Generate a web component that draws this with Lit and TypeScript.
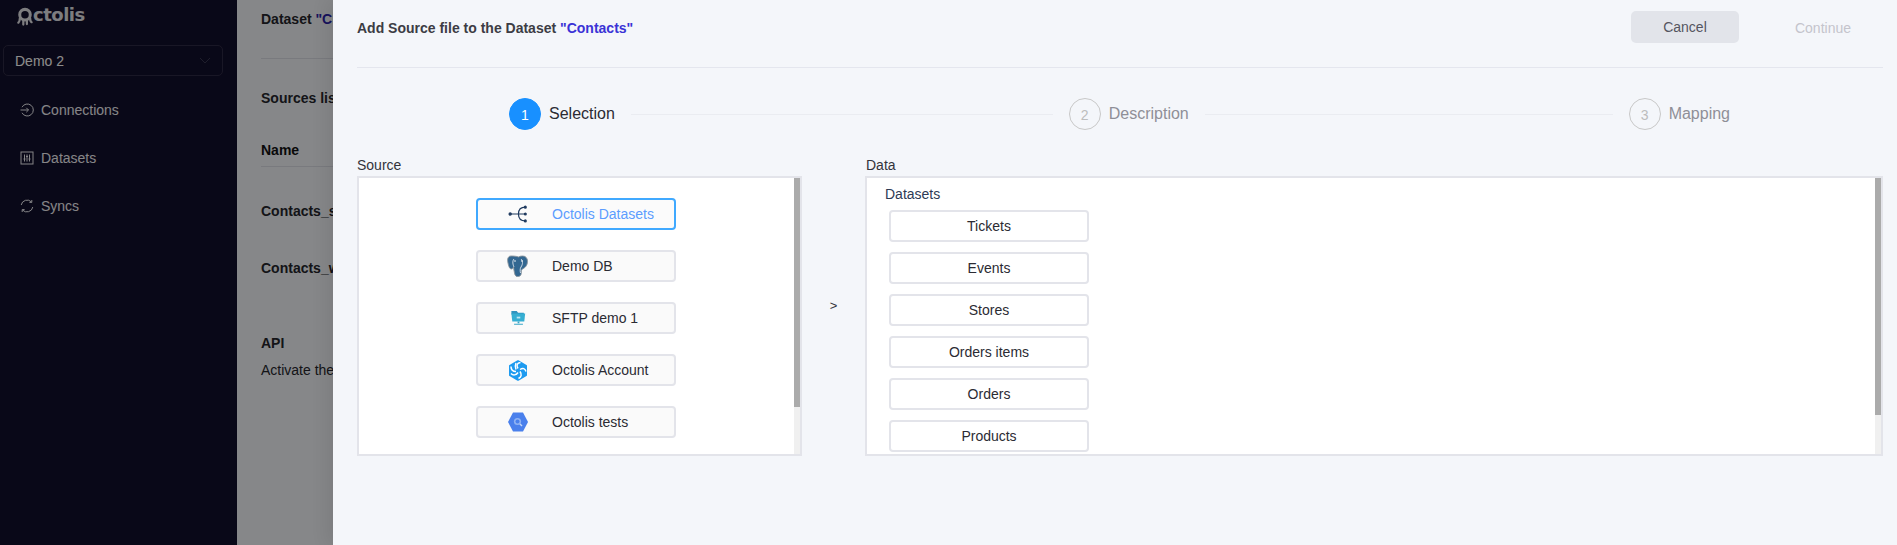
import { LitElement, html, css, svg } from "lit";
import { customElement } from "lit/decorators.js";

const arrowIcon = svg`<svg width="24" height="24" viewBox="0 0 24 24" fill="none" stroke="#1f3a5f" stroke-width="1.3" stroke-linecap="round"><path d="M3 12H20"/><circle cx="3.500" cy="12" r="1.200" fill="#1f3a5f"/><path d="M20 4.500C15 4.500 12.500 7 12.500 12s2.500 7.500 7.500 7.500"/><circle cx="20" cy="4.500" r="1" fill="#1f3a5f"/><circle cx="20" cy="19.500" r="1" fill="#1f3a5f"/><circle cx="20" cy="12" r="1" fill="#1f3a5f"/></svg>`;
const pgIcon = svg`<svg width="22" height="22" viewBox="0 0 22 22"><path d="M4 1C1 1 0 4 1 8c.6 3 1.500 6 3.500 6 1 0 1.500-1 2-2 .3 2 .5 4 1 6 .5 3 2 4 4 3.500 2.500-.5 2.800-2 2.800-4.500 0-1.500 0-2 1-2.800 2-1 5.200-3.200 5.200-8C20.500 3 18.500 1 15.500 1c-1.500 0-3 .3-4 1-1-.7-5-1-7.500-1z" fill="#336791" stroke="#8a949c" stroke-width=".9"/><path d="M7 4c-2 2-1 6 0 8M14 4c2 2 2 5 0 8-1 1.500-1 4-.5 6" fill="none" stroke="#dfe6ee" stroke-width=".9"/><circle cx="8" cy="6" r=".8" fill="#fff"/><circle cx="15" cy="6" r=".8" fill="#fff"/></svg>`;
const sftpIcon = svg`<svg width="15" height="16" viewBox="0 0 16 18"><path d="M0 1h6l1.500 2H14v2H0z" fill="#2f93bf"/><path d="M0 4h15.500l-1 9H1z" fill="#35aed2"/><rect x="6" y="7.500" width="4" height="2" fill="#bfe6f2"/><path d="M7 13h2v2H7zM3 15.500h10v1H3z" fill="#3aa6c8"/></svg>`;
const swirlIcon = svg`<svg width="20" height="21" viewBox="0 0 20 21"><path d="M10 1.200l8 4.600v9.400l-8 4.600-8-4.600V5.800z" fill="#1e9bf0" stroke="#1e9bf0" stroke-width="2" stroke-linejoin="round"/><g fill="none" stroke="#fff" stroke-width="1.500"><circle cx="10" cy="10.500" r="1.700" fill="#1e9bf0" stroke="none"/><path d="M10 8.500C8 5.500 9 3 12.500 2.500"/><path d="M12 9.500C15 7.500 17 8.500 18 11.500"/><path d="M12 11.500C14 14.500 13.500 17 10.500 18.500"/><path d="M10 12.500C8 15.500 5 15.500 3 13.500"/><path d="M8 11.500C5 11.500 3 9.500 3 6.500"/><path d="M8 9.500C7 6.500 7 5 8 3"/></g></svg>`;
const bqIcon = svg`<svg width="20" height="20" viewBox="0 0 20 20"><path d="M5 .5h10L20 10l-5 9.500H5L0 10z" fill="#4a80ec"/><circle cx="9.500" cy="9.500" r="3.600" fill="#8fb2f3"/><circle cx="9.500" cy="9.500" r="2" fill="#4a80ec"/><path d="M12 12l2 2" stroke="#c6d8f8" stroke-width="1.400"/></svg>`;

const connIcon = svg`<svg width="14" height="14" viewBox="0 0 14 14" fill="none" stroke="currentColor" stroke-width="1"><path d="M2 4.200A6 6 0 1 1 2 9.800"/><path d="M.5 7H8.500M6.300 4.800L8.500 7 6.300 9.200"/></svg>`;
const dataIcon = svg`<svg width="14" height="14" viewBox="0 0 14 14" fill="none" stroke="currentColor" stroke-width="1"><rect x="1" y="1" width="12" height="12"/><path d="M4.500 3.500v7M7 3.500v7M9.500 3.500v7"/><path d="M3.500 8h2M6 5.500h2M8.500 8h2"/></svg>`;
const syncIcon = svg`<svg width="14" height="14" viewBox="0 0 14 14" fill="none" stroke="currentColor" stroke-width="1"><path d="M1.200 6A6 6 0 0 1 11.500 3"/><path d="M12.800 8A6 6 0 0 1 2.500 11"/><path d="M11.800 1v2.400H9.400M2.200 13v-2.400h2.400"/></svg>`;

const octoLogo = svg`<svg class="octo" width="16" height="20" viewBox="0 0 17 20" fill="none"><circle cx="8.500" cy="7.500" r="5.600" stroke="currentColor" stroke-width="3.200"/><path d="M3 11.500c0 3-1 4-1.500 4.500M6.700 14v4M10.500 14v3.500M14 11.500c0 2.500.5 3.500 1.500 4" stroke="currentColor" stroke-width="2.400" stroke-linecap="round"/></svg>`;

const sources = [
  { name: "Octolis Datasets", icon: arrowIcon, active: true },
  { name: "Demo DB", icon: pgIcon },
  { name: "SFTP demo 1", icon: sftpIcon },
  { name: "Octolis Account", icon: swirlIcon },
  { name: "Octolis tests", icon: bqIcon },
];
const datasets = ["Tickets", "Events", "Stores", "Orders items", "Orders", "Products"];

@customElement("app-root")
export class AppRoot extends LitElement {
  static styles = css`
    :host { display: block; position: relative; width: 100%; height: 545px; overflow: hidden; background: #f4f6fa; font-family: "Liberation Sans", Arial, sans-serif; font-size: 14px; color: #2b2b33; }
    .page { display: flex; height: 545px; }
    .side { width: 237px; flex: none; background: #120f2c; color: #f0f0f5; box-sizing: border-box; }
    .logo { display: flex; align-items: flex-start; height: 32px; padding: 7px 0 0 17px; box-sizing: border-box; color: #e4e4e8; }
    .logo span { font: bold 18px/20px "DejaVu Sans", sans-serif; letter-spacing: -0.5px; position: relative; top: -2px; }
    .select { margin: 13px 0 0 3px; height: 31px; width: 220px; border: 1px solid #2e2b45; border-radius: 5px; display: flex; align-items: center; justify-content: space-between; padding: 0 11px; box-sizing: border-box; color: #fff; }
    .select svg { color: #3a3850; }
    .nav { display: flex; flex-direction: column; gap: 24px; padding: 22px 0 0 20px; }
    .nav div { display: flex; align-items: center; gap: 7px; height: 24px; color: #f2f2f6; }
    .main { width: 96px; flex: none; overflow: hidden; padding: 11px 0 0 24px; box-sizing: border-box; color: #26262c; }
    .main b { display: block; font-size: 14px; line-height: 16px; white-space: nowrap; }
    .main .q { color: #2b21a8; display: inline; }
    .main hr { border: 0; border-top: 1px solid #dcdfe6; margin: 0; }
    .main .gap-a { margin-top: 31px; }
    .main .gap-b { margin-top: 31px; }
    .main .gap-c { margin-top: 36px; }
    .main .gap-d { margin-top: 8px; }
    .main .gap-e { margin-top: 36px; }
    .main .gap-f { margin-top: 41px; }
    .main .gap-g { margin-top: 59px; }
    .main .gap-h { margin-top: 11px; line-height: 16px; white-space: nowrap; }
    .main .name { color: #111; }
    .mask { position: absolute; inset: 0; background: rgba(0, 0, 0, 0.45); }
    .drawer { position: absolute; top: 0; right: 0; bottom: 0; left: 333px; background: #f4f6fa; box-shadow: -6px 0 16px rgba(0, 0, 0, 0.08); padding: 0 14px 0 24px; box-sizing: border-box; display: flex; flex-direction: column; }
    .head { display: flex; align-items: center; justify-content: space-between; height: 68px; flex: none; border-bottom: 1px solid #e4e6ee; padding: 1px 0 12px; box-sizing: border-box; }
    .title { font-weight: bold; font-size: 14px; color: #3c3c44; }
    .title em { font-style: normal; color: #3a33d6; }
    .actions { display: flex; align-items: center; }
    .cancel { width: 108px; height: 32px; background: #e2e4ea; border-radius: 5px; display: flex; align-items: center; justify-content: center; color: #55555f; position: relative; top: -1px; }
    .continue { margin-left: 56px; margin-right: 32px; color: #c4c4cc; }
    .steps { display: flex; align-items: center; margin: 30px 153px 0 152px; height: 32px; }
    .circle { width: 32px; height: 32px; box-sizing: border-box; border-radius: 50%; border: 1px solid #c8c8c8; color: #bdbdbd; display: flex; align-items: center; justify-content: center; font-size: 14px; flex: none; padding-top: 2px; }
    .circle.on { background: #1890ff; border-color: #1890ff; color: #fff; }
    .lbl { font-size: 16px; margin-left: 8px; color: #8f8f97; flex: none; }
    .lbl.on { color: #2b2b33; }
    .line { height: 1px; background: #eaecf1; margin: 0 16px; flex: 1 1 0; }
    .line.a { flex-grow: 422; }
    .line.b { flex-grow: 408; }
    .cols { display: flex; margin-top: 27px; }
    .col { display: flex; flex-direction: column; }
    .col label { font-size: 14px; line-height: 16px; height: 19px; color: #33333b; }
    .box { height: 280px; box-sizing: border-box; border: 2px solid #e3e4ea; background: #fff; position: relative; overflow: hidden; }
    .bar { position: absolute; top: 0; right: 0; bottom: 0; width: 6px; background: #f0f0f0; }
    .bar i { display: block; width: 6px; background: #ababab; }
    .bar .s1 { height: 229px; }
    .bar .s2 { height: 237px; }
    .src { width: 445px; }
    .src .box { display: flex; flex-direction: column; align-items: center; gap: 20px; padding-top: 20px; padding-right: 7px; }
    .sbtn { width: 200px; height: 32px; flex: none; box-sizing: border-box; border: 2px solid #e3e4ea; border-radius: 4px; background: #fafafa; display: flex; align-items: center; color: #2b2b33; }
    .sbtn.on { border-color: #40a9ff; color: #5b9dff; background: #fbfbfb; }
    .ico { width: 22px; height: 22px; margin-left: 29px; margin-right: 23px; display: flex; align-items: center; justify-content: center; flex: none; }
    .sep { width: 63px; text-align: center; padding-top: 141px; font-size: 13px; color: #33333b; }
    .dst { flex: 1; }
    .dst label { padding-left: 1px; }
    .dst .box { padding: 7px 0 0 18px; }
    .dst h4 { margin: 0 0 6px; font-weight: normal; font-size: 14px; height: 19px; line-height: 19px; color: #2d3a55; }
    .list { display: flex; flex-direction: column; gap: 10px; padding-left: 4px; }
    .dbtn { width: 200px; height: 32px; box-sizing: border-box; border: 2px solid #e3e4ea; border-radius: 4px; display: flex; align-items: center; justify-content: center; color: #2b2b33; flex: none; }
  `;

  render() {
    return html`
      <div class="page">
        <aside class="side">
          <div class="logo">${octoLogo}<span>ctolis</span></div>
          <div class="select">Demo 2
            <svg width="12" height="8" viewBox="0 0 12 8" fill="none" stroke="currentColor"><path d="M1 1l5 5 5-5"/></svg>
          </div>
          <nav class="nav">
            <div>${connIcon}Connections</div>
            <div>${dataIcon}Datasets</div>
            <div>${syncIcon}Syncs</div>
          </nav>
        </aside>
        <main class="main">
          <b>Dataset <span class="q">"C</span></b>
          <hr class="gap-a" />
          <b class="gap-b">Sources lis</b>
          <b class="gap-c name">Name</b>
          <hr class="gap-d" />
          <b class="gap-e">Contacts_s</b>
          <b class="gap-f">Contacts_w</b>
          <b class="gap-g">API</b>
          <div class="gap-h">Activate the</div>
        </main>
      </div>
      <div class="mask"></div>
      <section class="drawer">
        <header class="head">
          <div class="title">Add Source file to the Dataset <em>"Contacts"</em></div>
          <div class="actions">
            <div class="cancel">Cancel</div>
            <div class="continue">Continue</div>
          </div>
        </header>
        <div class="steps">
          <div class="circle on">1</div><div class="lbl on">Selection</div><div class="line a"></div>
          <div class="circle">2</div><div class="lbl">Description</div><div class="line b"></div>
          <div class="circle">3</div><div class="lbl">Mapping</div>
        </div>
        <div class="cols">
          <div class="col src">
            <label>Source</label>
            <div class="box">
              ${sources.map((s) => html`<div class="sbtn ${s.active ? "on" : ""}"><span class="ico">${s.icon}</span>${s.name}</div>`)}
              <div class="bar"><i class="s1"></i></div>
            </div>
          </div>
          <div class="sep">&gt;</div>
          <div class="col dst">
            <label>Data</label>
            <div class="box">
              <h4>Datasets</h4>
              <div class="list">${datasets.map((d) => html`<div class="dbtn">${d}</div>`)}</div>
              <div class="bar"><i class="s2"></i></div>
            </div>
          </div>
        </div>
      </section>
    `;
  }
}
